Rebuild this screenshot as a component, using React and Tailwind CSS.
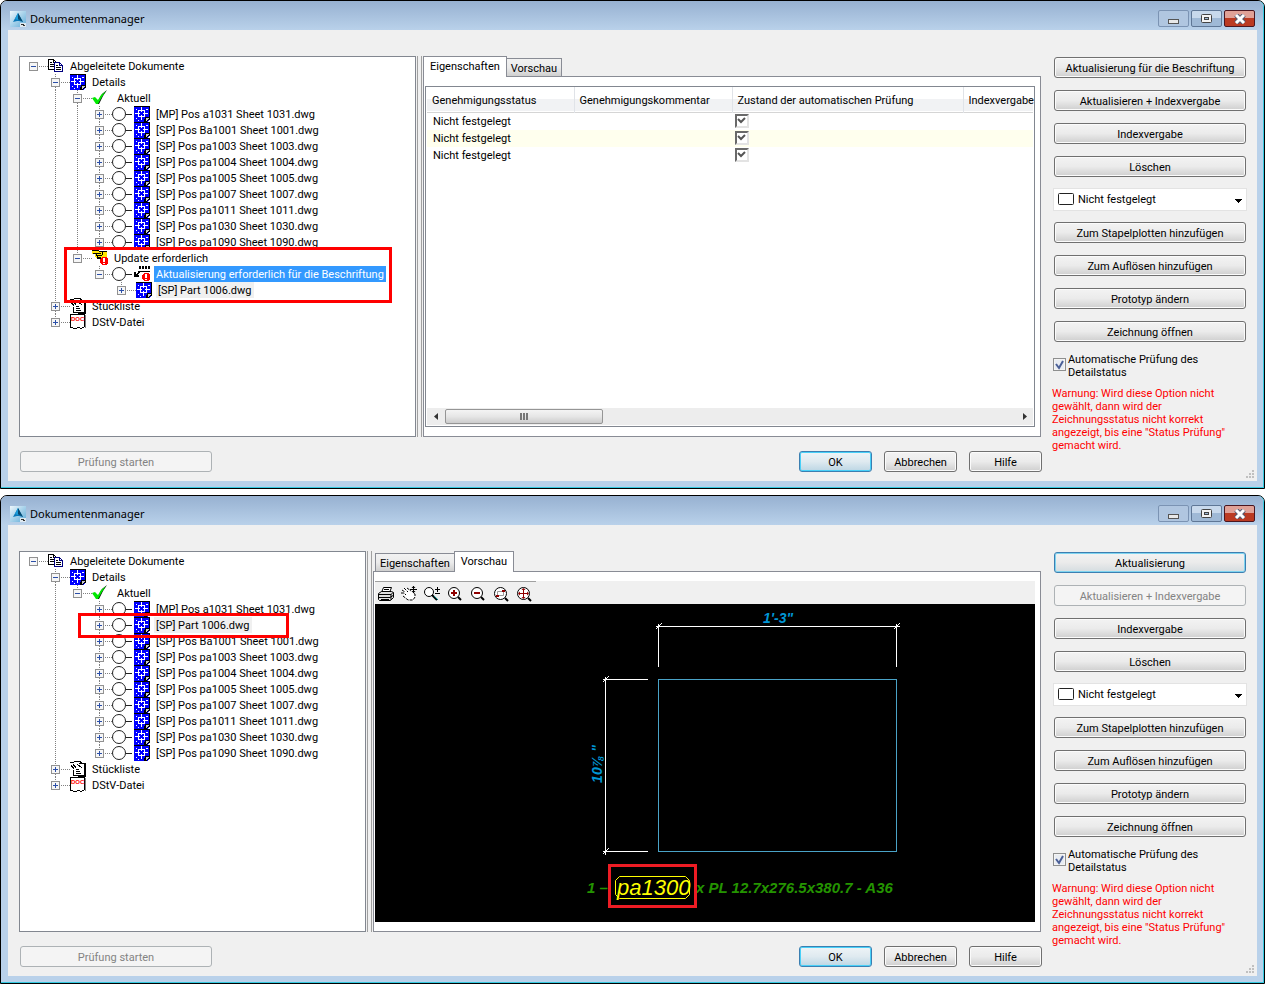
import React from 'react'

const positions = ['Ba1001', 'pa1003', 'pa1004', 'pa1005', 'pa1007', 'pa1011', 'pa1030', 'pa1090']

const sheets = positions.map(pos => ({
  label: `[SP] Pos ${pos} Sheet ${pos.slice(-4)}.dwg`,
  icon: 'dwg',
  circle: true,
  closed: true,
}))

const firstSheet = { label: '[MP] Pos a1031 Sheet 1031.dwg', icon: 'dwg', circle: true, closed: true }

const lists = [
  { label: 'Stückliste', icon: 'parts', closed: true },
  { label: 'DStV-Datei', icon: 'doc', closed: true },
]

const outdatedTree = {
  label: 'Abgeleitete Dokumente',
  icon: 'copies',
  children: [
    {
      label: 'Details',
      icon: 'dwg',
      children: [
        { label: 'Aktuell', icon: 'check', children: [firstSheet, ...sheets] },
        {
          label: 'Update erforderlich',
          icon: 'hand',
          children: [
            {
              label: 'Aktualisierung erforderlich für die Beschriftung',
              icon: 'label',
              circle: true,
              selected: true,
              children: [{ label: '[SP] Part 1006.dwg', icon: 'dwg', closed: true, marked: true }],
            },
          ],
        },
      ],
    },
    ...lists,
  ],
}

const updatedTree = {
  label: 'Abgeleitete Dokumente',
  icon: 'copies',
  children: [
    {
      label: 'Details',
      icon: 'dwg',
      children: [
        {
          label: 'Aktuell',
          icon: 'check',
          children: [
            firstSheet,
            { label: '[SP] Part 1006.dwg', icon: 'dwg', circle: true, closed: true, marked: true },
            ...sheets,
          ],
        },
      ],
    },
    ...lists,
  ],
}

// Turns the nested tree into rows; guides says which ancestor lines pass through a row
const flatten = (node, level = 0, guides = [], last = true) => {
  const kids = node.children || []
  const below = level === 0 ? [] : [...guides, !last]
  return [
    { ...node, level, guides, last },
    ...kids.flatMap((kid, i) => flatten(kid, level + 1, below, i === kids.length - 1)),
  ]
}

/* ---------- Icons ---------- */

const DwgIcon = () => (
  <svg width="16" height="16" shapeRendering="crispEdges" aria-hidden="true">
    <path d="M0 0h16v16H0z" fill="#000" />
    <path d="M0 1h15v15H0z" fill="#0000ff" />
    <path d="M4.500 4.500h6v6h-6zM7.500 1v5M7.500 9v5M1 7.500h5M9 7.500h5" fill="none" stroke="#fff" />
    <path d="M2 3h1v1H2zM12 3h2v1h-2zM2 12h1v1H2zM4 14h1v1H4z" fill="#fff" />
    <path d="M10 16l1-5h5v1l-4 4z" fill="#000" />
    <path d="M12 12h3l-3 3z" fill="#c8c8c8" />
    <path d="M13 16h3v-3z" fill="#fff" />
  </svg>
)

const CopiesIcon = () => (
  <svg width="16" height="16" shapeRendering="crispEdges" aria-hidden="true">
    <path d="M.5 1.500h5l3 3v7h-8z" fill="#fff" stroke="#000" />
    <path d="M5.500 1.500v3h3M2 4.500h2M2 6.500h4M2 8.500h4" fill="none" stroke="#000" />
    <path d="M6.500 4.500h5l3 3v6h-8z" fill="#fff" stroke="#000080" />
    <path d="M11.500 4.500v3h3" fill="none" stroke="#000080" />
    <path d="M8 7.500h2M8 9.500h5M8 11.500h5" fill="none" stroke="#000" />
  </svg>
)

const CheckIcon = () => (
  <svg width="16" height="16" aria-hidden="true">
    <path d="M1 8l3 1 2 2 4-7 5-4-4 6-4 8H5z" fill="#000" />
    <path d="M0 8l3-1 3 3 3-5 5-4-4 6-4 7-2 0z" fill="#00e800" />
  </svg>
)

const Alert = () => (
  <>
    <path d="M10 7h4l2 2v4l-2 2h-4l-2-2V9z" fill="#f00" />
    <path d="M11 8h2v4h-2zM11 13h2v1h-2z" fill="#fff" />
  </>
)

const HandIcon = () => (
  <svg width="16" height="16" shapeRendering="crispEdges" aria-hidden="true">
    <path d="M0 0h6l2 1h7v7h-5l-1 1H5L3 7V4H0z" fill="#ffe600" />
    <path d="M0 .5h6l2 1h7M1 3.500h8M4.500 4l1 3h3M6 5.500h4M5 8.500h5M10.500 2v3" fill="none" stroke="#000" />
    <Alert />
  </svg>
)

const LabelIcon = () => (
  <svg width="16" height="16" shapeRendering="crispEdges" aria-hidden="true">
    <path d="M5 0h2v3H5zM8 0h2v3H8zM11 0h2v3h-2zM14 0h2v3h-2z" fill="#000" />
    <path d="M4 5.500h12" stroke="#000" />
    <path d="M5 5L2 8V6H0v5h5V9H3l3-3z" fill="#000" />
    <Alert />
  </svg>
)

const PartsIcon = () => (
  <svg width="16" height="16" shapeRendering="crispEdges" aria-hidden="true">
    <path d="M6.500 2.500h8v12h-8z" fill="#fff" stroke="#000" />
    <path d="M15.500 2v14M8 15.500h8M0 1.500h3l2-1h5l2 2" stroke="#000" fill="none" />
    <path d="M3 3l6-1 4 5v7H3V8l3-1z" fill="#fff" />
    <path d="M3 3.500l3 3M7 3l5 4M3.500 9v5M3 14.500h9M6 8.500h3M6 10.500h4M6 12.500h5M1 4l3 4" stroke="#000" fill="none" />
  </svg>
)

const DocIcon = () => (
  <svg width="16" height="16" shapeRendering="crispEdges" aria-hidden="true">
    <path d="M.5 .5h14v12l-3 2-3-1-3 1-5-1z" fill="#fff" stroke="#000" />
    <path d="M15.500 1v13" stroke="#808080" />
    <text x="1" y="7" fill="#f00" stroke="none" fontSize="6" fontWeight="bold" fontFamily="Liberation Sans">DOC</text>
  </svg>
)

const icons = {
  dwg: DwgIcon,
  copies: CopiesIcon,
  check: CheckIcon,
  hand: HandIcon,
  label: LabelIcon,
  parts: PartsIcon,
  doc: DocIcon,
}

const AppIcon = () => (
  <svg width="16" height="16" aria-hidden="true">
    <defs>
      <linearGradient id="appBg" x1="0" y1="0" x2="1" y2="1">
        <stop offset="0" stopColor="#eef7fc" />
        <stop offset="1" stopColor="#5facd8" />
      </linearGradient>
    </defs>
    <path d="M0 0h16v16H0z" fill="url(#appBg)" />
    <path d="M8 2l5 9-4-1H7l-4 1z" fill="#0a78b8" />
    <path d="M8 2L5 8l3 1z" fill="#1b9bd8" />
    <path d="M8 2l5 9-5-3z" fill="#07486f" />
    <path d="M10 12h6v4h-6z" fill="#dfe9f0" />
    <path d="M11 13.500h3M13 14.500h2" stroke="#333" />
  </svg>
)

/* ---------- Tree ---------- */

const Guide = ({ on }) => (
  <svg width="22" height="16" shapeRendering="crispEdges" aria-hidden="true">
    {on && <path d="M11.500 0v16" stroke="#808080" strokeDasharray="1 1" />}
  </svg>
)

const Expander = ({ node }) => (
  <button type="button" aria-label={node.closed ? 'Erweitern' : 'Reduzieren'} className="block shrink-0">
    <svg width={node.circle ? 24 : 26} height="16" shapeRendering="crispEdges" aria-hidden="true">
      <g stroke="#808080" strokeDasharray="1 1">
        {node.level > 0 && <path d="M11.500 0v4" />}
        {node.level > 0 && !node.last && <path d="M11.500 13v3" />}
        <path d="M17 8.500h9" />
      </g>
      <rect x="7.500" y="4.500" width="8" height="8" fill="#f6f6f6" stroke="#919191" />
      <path d="M9 8.500h5" stroke="#2b4fa8" />
      {node.closed && <path d="M11.500 6v5" stroke="#2b4fa8" />}
    </svg>
  </button>
)

const TreeRow = ({ node }) => {
  const Icon = icons[node.icon]
  let tone = ''
  if (node.selected) tone = 'bg-[#3399ff] text-white'
  if (node.marked) tone = 'bg-[#f0f0f0]'
  return (
    <li className="flex h-4 items-center">
      {node.level > 0 && <Guide />}
      {node.guides.map((on, i) => <Guide key={i} on={on} />)}
      <Expander node={node} />
      {node.circle && (
        <svg width="22" height="16" aria-hidden="true">
          <circle cx="7" cy="8" r="6.500" fill="#fff" stroke="#222" />
          <path d="M14 8.500h6" stroke="#222" shapeRendering="crispEdges" />
        </svg>
      )}
      <Icon />
      <span className={`ml-1 h-4 whitespace-nowrap px-0.5 leading-[18px] ${node.icon === 'check' ? 'pl-[5px]' : ''} ${tone}`}>
        {node.label}
      </span>
    </li>
  )
}

const Tree = ({ root, className, children }) => (
  <div className={`relative shrink-0 overflow-hidden border border-[#828790] bg-white pt-px pl-0.5 ${className}`}>
    <ul>
      {flatten(root).map((node, i) => <TreeRow key={i} node={node} />)}
    </ul>
    {children}
  </div>
)

/* ---------- Controls ---------- */

const tones = {
  normal: 'border-[#707070] bg-linear-to-b from-[#f3f3f3] from-0% via-[#ebebeb] via-50% to-[#cfcfcf] shadow-[inset_0_0_0_1px_#fbfbfb]',
  primary: 'border-[#3c7fb1] bg-linear-to-b from-[#eef4f7] from-0% via-[#dfeaf0] via-50% to-[#bcd6e4] shadow-[inset_0_0_0_1px_#48d0f8]',
  focus: 'border-[#3c7fb1] bg-linear-to-b from-[#f3f3f3] from-0% via-[#ebebeb] via-50% to-[#d4dce0] shadow-[inset_0_0_0_1px_#7fd4f0]',
  disabled: 'border-[#adb2b5] bg-[#f4f4f4] text-[#838383]',
}

const Button = ({ tone = 'normal', className = 'w-full', children }) => (
  <button
    type="button"
    disabled={tone === 'disabled'}
    className={`h-[21px] rounded-[3px] border pt-0.5 text-center leading-4 whitespace-nowrap ${tones[tone]} ${className}`}
  >
    {children}
  </button>
)

const StatusSelect = ({ id }) => (
  <div className="relative -mx-px">
    <select
      id={id}
      aria-label="Genehmigungsstatus"
      className="block h-[23px] w-full appearance-none border border-[#e3e3e3] bg-white pt-0.5 pl-6"
    >
      <option>Nicht festgelegt</option>
    </select>
    <svg className="pointer-events-none absolute top-1 left-1" width="18" height="14" aria-hidden="true">
      <rect x="1.500" y="1.500" width="15" height="11" rx="1" fill="#fff" stroke="#222" />
    </svg>
    <svg className="pointer-events-none absolute top-[11px] right-[5px]" width="8" height="5" shapeRendering="crispEdges" aria-hidden="true">
      <path d="M0 0h8L4 4z" fill="#000" />
    </svg>
  </div>
)

const Sidebar = ({ id, updateButton, indexTone }) => (
  <aside className="w-[192px] shrink-0 pt-[21px]">
    <div className="grid auto-rows-[33px] items-center">
      {updateButton}
      <Button tone={indexTone}>Aktualisieren + Indexvergabe</Button>
      <Button>Indexvergabe</Button>
      <Button>Löschen</Button>
      <StatusSelect id={`${id}-status`} />
      <Button>Zum Stapelplotten hinzufügen</Button>
      <Button>Zum Auflösen hinzufügen</Button>
      <Button>Prototyp ändern</Button>
      <Button>Zeichnung öffnen</Button>
    </div>
    <div className="-ml-px mt-[5px] flex items-start gap-0.5">
      <span className="relative mt-[5px] h-[13px] w-[13px] shrink-0">
        <input
          id={`${id}-auto`}
          type="checkbox"
          defaultChecked
          className="block h-[13px] w-[13px] appearance-none border border-[#8e8f8f] bg-[#e8ecf2] shadow-[inset_0_0_0_1px_#f4f4f4]"
        />
        <svg className="pointer-events-none absolute inset-0" width="13" height="13" aria-hidden="true">
          <path d="M3 6l3 4 4-7" fill="none" stroke="#4a5f97" strokeWidth="2" />
        </svg>
      </span>
      <label htmlFor={`${id}-auto`} className="leading-[13px]">
        Automatische Prüfung des<br />Detailstatus
      </label>
    </div>
    <p className="-ml-0.5 mt-2 leading-[13px] text-[#ff0000]">
      Warnung: Wird diese Option nicht<br />
      gewählt, dann wird der<br />
      Zeichnungsstatus nicht korrekt<br />
      angezeigt, bis eine "Status Prüfung"<br />
      gemacht wird.
    </p>
  </aside>
)

const Tab = ({ active, children }) => (
  <button
    type="button"
    role="tab"
    aria-selected={Boolean(active)}
    className={
      active
        ? 'relative z-10 -mb-px h-[21px] border border-b-0 border-[#898c95] bg-white px-1.5'
        : '-mx-px h-[18px] border border-b-0 border-[#898c95] bg-linear-to-b from-[#f2f2f2] from-0% via-[#ebebeb] via-50% to-[#cfcfcf] px-1 pt-0.5'
    }
  >
    {children}
  </button>
)

/* ---------- Properties ---------- */

const SunkenCheck = ({ label }) => (
  <span className="relative ml-[3px] block h-3.5 w-3.5">
    <input
      type="checkbox"
      aria-label={label}
      defaultChecked
      className="block h-3.5 w-3.5 appearance-none border-2 border-t-[#696969] border-r-[#e3e3e3] border-b-[#e3e3e3] border-l-[#696969] bg-white"
    />
    <svg className="pointer-events-none absolute inset-0" width="14" height="14" aria-hidden="true">
      <path d="M3 5l3 3 4-4" fill="none" stroke="#555" strokeWidth="2" />
    </svg>
  </span>
)

const headers = ['Genehmigungsstatus', 'Genehmigungskommentar', 'Zustand der automatischen Prüfung', 'Indexvergabe']

const Properties = () => (
  <div className="flex flex-1 flex-col overflow-hidden border border-[#828790] bg-white p-px pt-0">
    <div className="flex-1">
      <table className="w-full table-fixed border-collapse">
        <colgroup>
          <col className="w-[147px]" />
          <col className="w-[158px]" />
          <col className="w-[231px]" />
          <col />
        </colgroup>
        <thead>
          <tr className="h-[25px] border-b border-[#d5d5d5] bg-linear-to-b from-white from-50% to-[#f1f2f4] to-50%">
            {headers.map(header => (
              <th key={header} className="border-r border-[#e0e3e8] pt-1 pl-[5px] text-left font-normal whitespace-nowrap last:border-r-0">
                {header}
              </th>
            ))}
          </tr>
        </thead>
        <tbody>
          {[1, 2, 3].map(row => (
            <tr key={row} className="h-[17px] even:bg-[#ffffee]">
              <td className="pt-px pl-1.5 leading-4">Nicht festgelegt</td>
              <td />
              <td><SunkenCheck label={`Automatische Prüfung ${row}`} /></td>
              <td />
            </tr>
          ))}
        </tbody>
      </table>
    </div>
    <div className="flex h-[17px] items-center bg-[#ededed]">
      <button type="button" aria-label="Nach links" className="flex h-full w-[17px] items-center justify-center">
        <svg width="4" height="7" aria-hidden="true"><path d="M4 0v7L0 3.500z" fill="#333" /></svg>
      </button>
      <div className="ml-px flex h-[15px] w-[158px] items-center justify-center gap-px rounded-xs border border-[#959595] bg-linear-to-b from-[#f4f4f4] from-0% via-[#e6e6e6] via-50% to-[#cccccc]">
        <span className="h-[7px] w-0.5 bg-[#777]" />
        <span className="h-[7px] w-0.5 bg-[#777]" />
        <span className="h-[7px] w-0.5 bg-[#777]" />
      </div>
      <button type="button" aria-label="Nach rechts" className="ml-auto flex h-full w-[17px] items-center justify-center">
        <svg width="4" height="7" aria-hidden="true"><path d="M0 0v7l4-3.500z" fill="#333" /></svg>
      </button>
    </div>
  </div>
)

/* ---------- Preview ---------- */

const Lens = ({ children }) => (
  <svg width="16" height="16" aria-hidden="true">
    <circle cx="7" cy="7" r="5.500" fill="#fff" stroke="#000" />
    <path d="M11 11l3 3" stroke="#000" strokeWidth="2" />
    {children}
  </svg>
)

const tools = [
  {
    label: 'Drucken',
    icon: (
      <svg width="16" height="16" aria-hidden="true">
        <path d="M5.500 1.500h8l-2 5h-8z" fill="#fff" stroke="#000" />
        <path d="M6 3.500h5M5 5.500h5" stroke="#000" />
        <path d="M.5 7.500l3-2h10l2 1v5l-3 3h-11l-1-1z" fill="#ddd" stroke="#000" />
        <path d="M1 8.500h12l2-2M1 11.500h11l3-2M13 8v6M3 13.500h8" stroke="#000" fill="none" />
      </svg>
    ),
  },
  {
    label: 'Pan',
    icon: (
      <svg width="16" height="16" aria-hidden="true">
        <path d="M1 4l3 2H1l2 3 1 3 3 3h6l1-5-1-3-2-1-2-2-3-1-2-1-2 1z" fill="#fff" />
        <path d="M1 4l3 2M3 2l4 4M6 2l4 3M0 7h3l2 2M2 10l5 4h5l2-3V8l-2-1" fill="none" stroke="#000" strokeDasharray="3 1" />
        <path d="M12.500 0v7M9 3.500h7" stroke="#000" />
        <path d="M12.500 0l2 2h-4zM12.500 7l2-2h-4z" fill="#000" />
      </svg>
    ),
  },
  {
    label: 'Zoom',
    icon: (
      <svg width="16" height="16" aria-hidden="true">
        <circle cx="5" cy="6" r="4.500" fill="#fff" stroke="#000" />
        <path d="M8 9l5 5" stroke="#000" strokeWidth="2" />
        <path d="M10 10l4 4" stroke="#008080" />
        <path d="M11 3.500h5M13.500 1v5M11 7.500h5" stroke="#000" />
      </svg>
    ),
  },
  { label: 'Vergrößern', icon: <Lens><path d="M4 7h6M7 4v6" stroke="#900000" strokeWidth="2" /></Lens> },
  { label: 'Verkleinern', icon: <Lens><path d="M4 7h6" stroke="#900000" strokeWidth="2" /></Lens> },
  {
    label: 'Zoom Fenster',
    icon: (
      <svg width="16" height="16" aria-hidden="true">
        <circle cx="7.500" cy="7.500" r="6" fill="#fff" stroke="#000" />
        <path d="M12 12l3 3" stroke="#000" strokeWidth="2" />
        <path d="M4.500 5.500h6v4h-6z" fill="none" stroke="#999" />
        <path d="M3 9h3v2H3zM9 4h3v2H9z" fill="#900000" />
      </svg>
    ),
  },
  {
    label: 'Zoom Grenzen',
    icon: (
      <svg width="16" height="16" aria-hidden="true">
        <circle cx="7.500" cy="7.500" r="6" fill="#fff" stroke="#000" />
        <path d="M12 12l3 3" stroke="#000" strokeWidth="2" />
        <path d="M7.500 3v9M3 7.500h9" stroke="#900000" />
        <path d="M7.500 2l2 2h-4zM7.500 13l2-2h-4zM2 7.500l2 2v-4zM13 7.500l-2 2v-4z" fill="#900000" />
      </svg>
    ),
  },
]

const Tick = ({ x, y }) => <path d={`M${x - 3} ${y + 3}l6 -6M${x} ${y - 3}v6M${x - 3} ${y}h6`} stroke="#fff" />

const Preview = () => (
  <div className="flex flex-1 flex-col">
    <div className="flex h-[23px] items-center bg-[#f0f0f0]">
      <div className="flex h-full w-[161px] items-center gap-[7px] border-t border-[#a0a0a0] pt-px pl-[3px]">
        {tools.map(tool => (
          <button key={tool.label} type="button" aria-label={tool.label}>{tool.icon}</button>
        ))}
      </div>
    </div>
    <div className="flex flex-1 items-start bg-black">
      <svg viewBox="0 0 660 317" className="w-full" fontFamily="Liberation Sans, Arial, sans-serif" fontStyle="italic" aria-label="Vorschau der Zeichnung">
        <g fill="none" stroke="#fff" shapeRendering="crispEdges">
          <path d="M283.500 22.500h238M283.500 22v41M521.500 22v41" />
          <path d="M230.500 75.500v172M230 75.500h43M230 247.500h43" />
          <Tick x={283.5} y={22.5} />
          <Tick x={521.5} y={22.5} />
          <Tick x={230.5} y={75.5} />
          <Tick x={230.5} y={247.5} />
          <path d="M283.500 75.500h238v172h-238z" stroke="#4aa3c7" />
        </g>
        <g fill="#0096d6" fontSize="14" fontWeight="bold">
          <text x="403" y="19" textAnchor="middle">1'-3"</text>
          <text x="227" y="160" textAnchor="middle" transform="rotate(-90 227 160)">10⅞ "</text>
        </g>
        <g fill="#249400" fontSize="15" fontWeight="bold">
          <text x="212" y="289">1 –</text>
          <text x="321" y="289">x PL 12.7x276.5x380.7 - A36</text>
        </g>
        <rect x="234.500" y="261.500" width="86" height="41" fill="none" stroke="#ed1c24" strokeWidth="3" />
        <path d="M244.500 272.500h66l4 4v14l-4 4h-66l-4-4v-14z" fill="none" stroke="#ffff00" />
        <text x="242" y="291" fill="#ffff00" fontSize="22">pa1300</text>
      </svg>
    </div>
  </div>
)

/* ---------- Window ---------- */

const captionButton = 'flex h-[17px] w-[31px] items-center justify-center rounded-xs border'

const DialogWindow = ({ tree, tabs, sidebar, children }) => (
  <section className="mr-px rounded-t-[7px] border border-black bg-[#b9d1ea]">
    <div className="rounded-t-md border-r border-b border-[#35c9e0] pr-1.5 pb-1.5 pl-[7px]">
      <header className="-mr-1.5 -ml-[7px] flex h-[29px] items-center rounded-t-md bg-linear-to-b from-[#97b1d1] to-[#b9d1ea] pt-1.5 pr-2 pl-[9px]">
        <AppIcon />
        <h1 className="ml-1 font-['Noto_Sans',sans-serif] text-[11px] leading-4">Dokumentenmanager</h1>
        <div className="ml-auto flex gap-0.5">
          <button type="button" aria-label="Minimieren" className={`${captionButton} border-[#7b93b3] bg-[#b0c6e0]`}>
            <svg width="12" height="12" aria-hidden="true"><rect x=".5" y="6.500" width="10" height="4" fill="#e8e8e8" stroke="#555" /></svg>
          </button>
          <button type="button" aria-label="Maximieren" className={`${captionButton} border-[#5f7796] bg-linear-to-b from-[#c8d9ec] from-50% to-[#9fb9d6] to-50%`}>
            <svg width="11" height="11" aria-hidden="true">
              <rect x=".5" y="1.500" width="10" height="8" rx="1" fill="#f4f4f4" stroke="#444" />
              <rect x="3.500" y="4.500" width="4" height="2" fill="#9fb9d6" stroke="#444" />
            </svg>
          </button>
          <button type="button" aria-label="Schließen" className={`${captionButton} border-[#4a1620] bg-linear-to-b from-[#e0a197] from-50% to-[#bb3a22] to-50%`}>
            <svg width="12" height="10" aria-hidden="true">
              <path d="M2 1l8 8M10 1L2 9" stroke="#555a70" strokeWidth="5" />
              <path d="M2 1l8 8M10 1L2 9" stroke="#fff" strokeWidth="3" />
            </svg>
          </button>
        </div>
      </header>

      <div className="relative flex gap-3 bg-[#f0f0f0] pr-[11px] pb-[9px] pl-[11px]">
        <div className="flex min-w-0 flex-1 flex-col pt-[26px]">
          <div className="flex min-h-[381px] flex-1 pr-px">
            {tree}
            <div className="mx-px w-[5px] shrink-0 border-x border-[#a0a0a0]" />
            <div className="flex min-w-0 flex-1 flex-col">
              <div role="tablist" className="flex h-5 items-end">{tabs}</div>
              <div className="flex flex-1 border border-[#898c95] bg-white py-[9px] pr-[5px] pl-px">
                {children}
              </div>
            </div>
          </div>
          <footer className="mt-3.5 flex gap-3">
            <Button tone="disabled" className="ml-px w-[192px]">Prüfung starten</Button>
            <Button tone="primary" className="ml-auto w-[73px]">OK</Button>
            <Button className="w-[73px]">Abbrechen</Button>
            <Button className="w-[73px]">Hilfe</Button>
          </footer>
        </div>
        {sidebar}
        <svg className="absolute right-0.5 bottom-0.5" width="9" height="9" shapeRendering="crispEdges" aria-hidden="true">
          <path d="M6 0h2v2H6zM3 3h2v2H3zM6 3h2v2H6zM0 6h2v2H0zM3 6h2v2H3zM6 6h2v2H6z" fill="#c0c0c0" />
        </svg>
      </div>
    </div>
  </section>
)

const App = () => (
  <main className="flex flex-col gap-1.5 bg-white font-['Roboto',sans-serif] text-[11px] text-black">
    <DialogWindow
      tree={
        <Tree root={outdatedTree} className="w-[397px]">
          <div className="absolute top-[190px] left-11 h-14 w-[328px] border-3 border-[#ff0000]" />
        </Tree>
      }
      tabs={<><Tab active>Eigenschaften</Tab><Tab>Vorschau</Tab></>}
      sidebar={<Sidebar id="outdated" updateButton={<Button>Aktualisierung für die Beschriftung</Button>} />}
    >
      <Properties />
    </DialogWindow>

    <DialogWindow
      tree={
        <Tree root={updatedTree} className="w-[347px]">
          <div className="absolute top-[61px] left-[58px] h-[25px] w-[211px] border-3 border-[#ff0000]" />
        </Tree>
      }
      tabs={<><span className="w-[3px]" /><Tab>Eigenschaften</Tab><Tab active>Vorschau</Tab></>}
      sidebar={<Sidebar id="updated" indexTone="disabled" updateButton={<Button tone="focus">Aktualisierung</Button>} />}
    >
      <Preview />
    </DialogWindow>
  </main>
)

export default App
